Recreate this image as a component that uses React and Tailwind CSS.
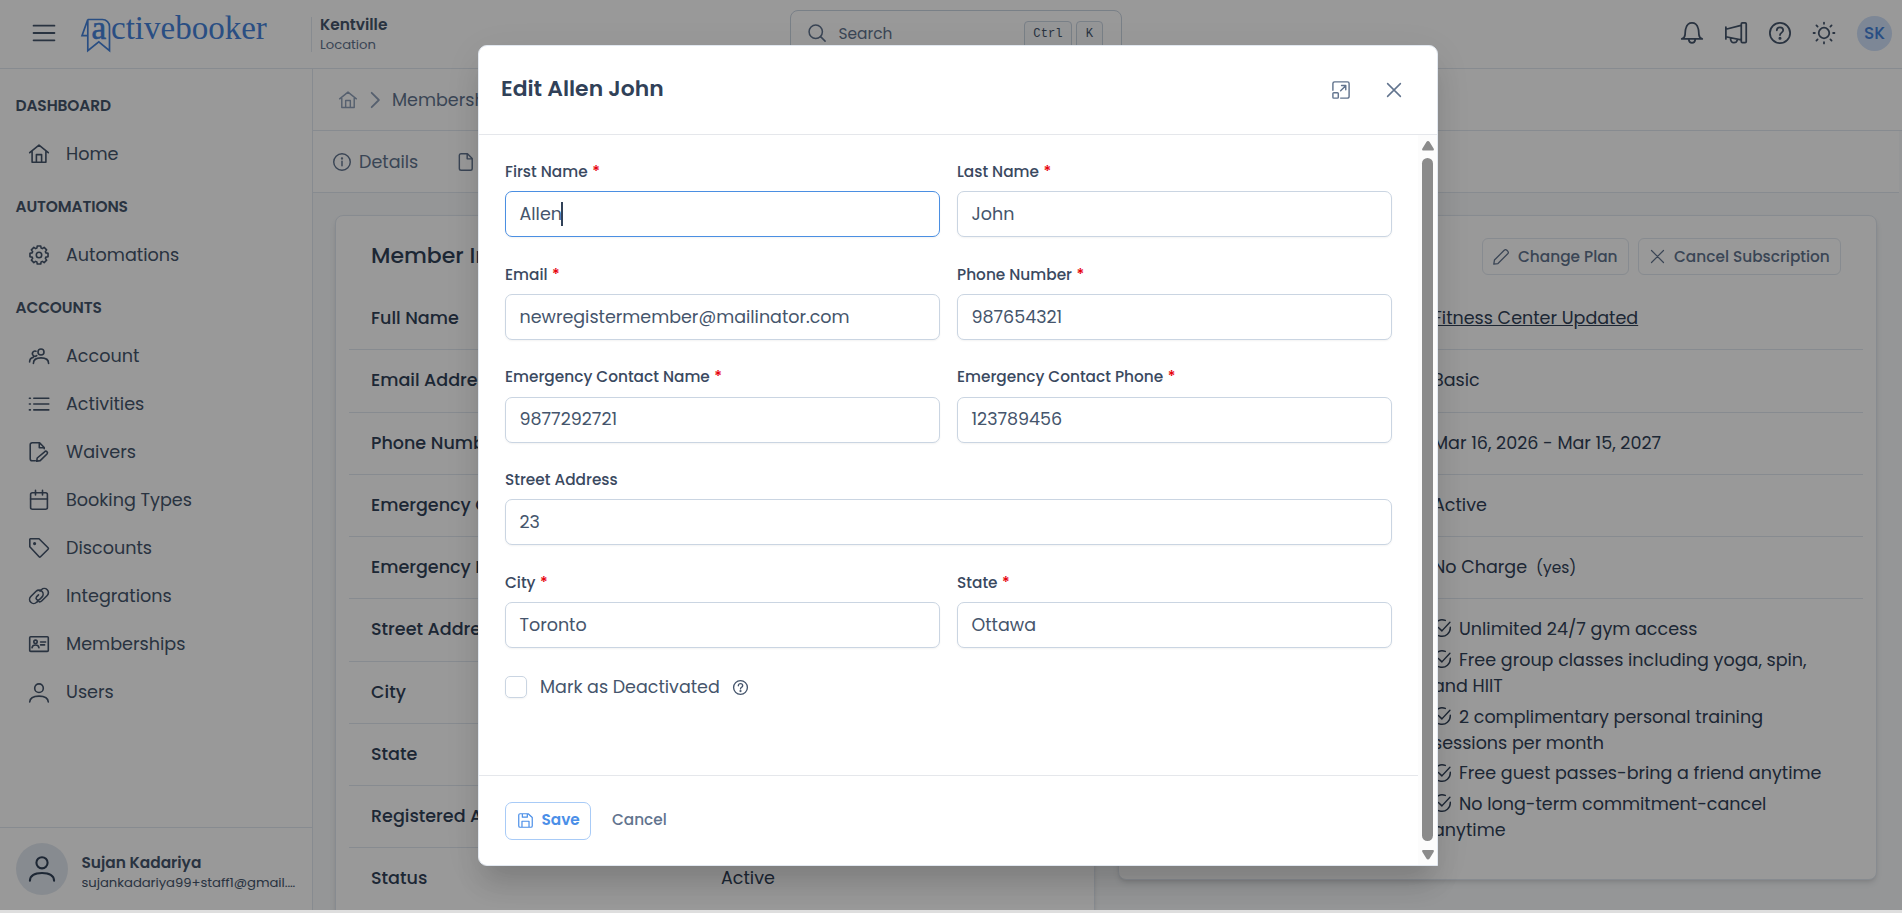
import React from "react";
import clsx from "clsx";

const cogPath = (() => {
  const pts = [];
  for (let i = 0; i < 8; i++) {
    [
      [-0.3, 7.2],
      [-0.19, 9.2],
      [0.19, 9.2],
      [0.3, 7.2],
    ].forEach(([offset, r]) => {
      const a = (i * Math.PI) / 4 + offset;
      pts.push(`${(10 + r * Math.sin(a)).toFixed(2)} ${(10 - r * Math.cos(a)).toFixed(2)}`);
    });
  }
  return `M${pts.join("L")}Z`;
})();

// 20x20 outline icons
const icons = {
  bars: <path d="M.5 3.3h19M.5 10h19M.5 16.7h19" />,
  home: (
    <path d="M.7 8.7 10 1.2l9.3 7.5M3.1 7v11.3h13.8V7M7.4 18v-7.4h5.2V18" />
  ),
  cog: (
    <>
      <path d={cogPath} />
      <circle cx="10" cy="10" r="2.7" />
    </>
  ),
  users: (
    <>
      <circle cx="12" cy="6" r="3" />
      <path d="M4.4 17.4c0-3.6 2.6-5.5 7.6-5.5s7.6 1.9 7.6 5.5M7 5.2a2.6 2.6 0 1 0 .7 4.4M.6 16c0-2.4 1.1-4 3.6-4.6" />
    </>
  ),
  list: <path d="M.4 4.2h1M.4 10h1M.4 15.9h1M4.8 4.2h15M4.8 10h15M4.8 15.9h15" />,
  fileEdit: (
    <path d="M6.3 18.8H3.1A1.9 1.9 0 0 1 1.2 17V2.7A1.9 1.9 0 0 1 3.1.8h7.5l4.6 4.7v1.2M10.3 1v4.8h4.6M7.7 19.3l.5-3.3 7.4-6.2a1.6 1.6 0 0 1 2.4 2.2l-6.8 6.6z" />
  ),
  calendar: (
    <>
      <rect x="1.6" y="2.8" width="16.8" height="16.4" rx="1.8" />
      <path d="M1.6 9h16.8M6.5.4v4.5M13.5.4v4.5" />
    </>
  ),
  tag: (
    <>
      <path d="M.8 1.2v7.5l9.3 10a1 1 0 0 0 1.4 0l7.6-7.5a1 1 0 0 0 0-1.4L10 .7H1.3z" />
      <circle cx="5.6" cy="5.6" r=".8" fill="currentColor" />
    </>
  ),
  link: (
    <path d="M9.1 14.9 7.6 16.3A4.1 4.1 0 0 1 1.8 10.5l5.3-5.2a4.1 4.1 0 0 1 5.8 5.8l-2.6 2.6a2 2 0 0 1-2.8-2.8l2-2M10.9 5.1l1.5-1.4a4.1 4.1 0 0 1 5.8 5.8l-5.3 5.2a4.1 4.1 0 0 1-2.6 1.2" />
  ),
  idCard: (
    <>
      <rect x=".7" y="2.8" width="18.6" height="14.6" rx="1" />
      <circle cx="6.5" cy="7.8" r="1.7" />
      <path d="M3 13.8c.3-2 1.5-2.8 3.5-2.8s3.2.8 3.5 2.8M11.6 8h5M11.6 10.9h4" />
    </>
  ),
  user: (
    <>
      <circle cx="10" cy="5.2" r="4.3" />
      <path d="M.7 19c.2-4 3-5.9 9.3-5.9s9.1 1.9 9.3 5.9" />
    </>
  ),
  search: (
    <>
      <circle cx="8.6" cy="8.6" r="7.4" />
      <path d="m14 14 5 5" />
    </>
  ),
  bell: (
    <path d="M.7 15.4C3 14.8 3.5 13.6 3.7 11.5c.2-2.1.1-4.2.8-6C5.4 2.5 7.2.9 10 .9s4.6 1.6 5.5 4.6c.7 1.8.6 3.9.8 6 .2 2.1.7 3.3 3 3.9zM7 15.8c.2 2 1.2 3.1 3 3.1s2.8-1.1 3-3.1" />
  ),
  megaphone: (
    <path d="M.8 4.6v10.8M.8 6.6l13.8-3.6M.8 13.4l13.8 2.8M15.8.9h2.5a1 1 0 0 1 1 1v15.9a1 1 0 0 1-1 1h-2.5a1 1 0 0 1-1-1V1.9a1 1 0 0 1 1-1zM5 14.6c-.1 2.7 1.2 4.2 3.1 4.2 1.5 0 2.7-.8 3.1-2.6" />
  ),
  question: (
    <>
      <circle cx="10" cy="10" r="9.2" />
      <path d="M7.1 7.6c0-1.7 1.2-2.8 2.9-2.8s2.9 1.1 2.9 2.7c0 2.2-2.9 2.2-2.9 4.4" />
      <circle cx="10" cy="14.7" r=".6" fill="currentColor" />
    </>
  ),
  sun: (
    <>
      <circle cx="10" cy="10" r="4.8" />
      <path d="M10 .5v1.2M10 18.3v1.2M.5 10h1.2M18.3 10h1.2M3.1 3.1l1.1 1.1M15.8 15.8l1.1 1.1M3.1 16.9l1.1-1.1M15.8 4.2l1.1-1.1" />
    </>
  ),
  chevron: <path d="m6.3 2 8 8-8 8" />,
  info: (
    <>
      <circle cx="10" cy="10" r="9.2" />
      <path d="M10 9v5.3" />
      <circle cx="10" cy="6" r=".5" fill="currentColor" />
    </>
  ),
  file: (
    <path d="M4.3.8h7.3l5.3 5.4v11a2 2 0 0 1-2 2H4.6a2 2 0 0 1-2-2V2.6A1.8 1.8 0 0 1 4.3.8zM11.3 1v5.5h5.4" />
  ),
  pencil: <path d="m1 19 .8-5.2L14 1.6a2.4 2.4 0 0 1 3.3 0l1.1 1.1a2.4 2.4 0 0 1 0 3.3L6.2 18.2z" />,
  times: <path d="m2 2 16 16M18 2 2 18" />,
  checkCircle: (
    <path d="M19.2 9.2v.8A9.2 9.2 0 1 1 13.7 1.6M6 9.4l3.9 3.8L18.8 3.6" />
  ),
  maximize: (
    <>
      <path d="M1 10.2V2.8A1.8 1.8 0 0 1 2.8 1h14.4A1.8 1.8 0 0 1 19 2.8v14.4a1.8 1.8 0 0 1-1.8 1.8H9.6M9.6 10.8l5.6-5.6M10.6 5.1h4.7v4.7" />
      <rect x="1" y="13" width="6" height="6" rx="1" />
    </>
  ),
  save: (
    <path d="M2.8 1h10.8l5.4 5v11.2a1.8 1.8 0 0 1-1.8 1.8H2.8A1.8 1.8 0 0 1 1 17.2V2.8A1.8 1.8 0 0 1 2.8 1zM5.3 19v-8h9.4v8M5.8 1v4.6h6.6V1" />
  ),
};

const Icon = ({ name, className, stroke = 1.6 }) => (
  <svg
    viewBox="0 0 20 20"
    className={clsx("shrink-0 overflow-visible", className)}
    fill="none"
    stroke="currentColor"
    strokeWidth={stroke}
    strokeLinecap="round"
    strokeLinejoin="round"
  >
    {icons[name]}
  </svg>
);

const sections = [
  { title: "DASHBOARD", items: [["home", "Home"]] },
  { title: "AUTOMATIONS", items: [["cog", "Automations"]] },
  {
    title: "ACCOUNTS",
    items: [
      ["users", "Account"],
      ["list", "Activities"],
      ["fileEdit", "Waivers"],
      ["calendar", "Booking Types"],
      ["tag", "Discounts"],
      ["link", "Integrations"],
      ["idCard", "Memberships"],
      ["user", "Users"],
    ],
  },
];

const memberRows = [
  "Full Name",
  "Email Address",
  "Phone Number",
  "Emergency Contact",
  "Emergency Phone",
  "Street Address",
  "City",
  "State",
  "Registered At",
];

const features = [
  "Unlimited 24/7 gym access",
  "Free group classes including yoga, spin, and HIIT",
  "2 complimentary personal training sessions per month",
  "Free guest passes-bring a friend anytime",
  "No long-term commitment-cancel anytime",
];

const Logo = () => (
  <svg width="190" height="44" viewBox="0 0 190 44" className="text-[#4583da]">
    <path
      d="M7.8 6.5h14.7a7 7 0 0 1 7 7v24.2L18.8 28.8 7.8 37.7V6.5L2 22.6h5.8"
      fill="none"
      stroke="currentColor"
      strokeWidth="1.7"
    />
    <text y="26" fill="currentColor" className="font-['Liberation_Serif',serif] text-[33px]">
      <tspan x="11.5" stroke="currentColor" strokeWidth=".6">
        a
      </tspan>
      <tspan x="31">ctivebooker</tspan>
    </text>
  </svg>
);

const Header = () => (
  <header className="flex h-[69px] shrink-0 items-center border-b border-slate-200 bg-white">
    <div className="flex w-[311px] items-center pl-[33px] text-slate-600">
      <Icon name="bars" className="-mt-[3px] h-[22px] w-[22px]" />
      <div className="mt-[2px] ml-[25px]">
        <Logo />
      </div>
    </div>
    <div className="flex h-[35px] w-[479px] flex-col justify-center border-l border-slate-200 pt-[2px] pl-2 text-slate-600">
      <span className="text-[15.4px] leading-5 font-semibold">Kentville</span>
      <span className="text-[13.2px] leading-5 text-slate-500">Location</span>
    </div>
    <div className="mt-[-2px] flex h-[46px] w-[332px] items-center rounded-lg border border-slate-300 pr-[18px] pl-[17px] text-slate-500">
      <Icon name="search" className="h-[18px] w-[18px]" stroke={1.7} />
      <span className="mt-px ml-[12.5px] flex-1 text-[15.4px]">Search</span>
      <div className="mt-[3px] flex gap-1 font-['Liberation_Mono',monospace] text-[12.2px] text-slate-600">
        <kbd className="flex h-[28px] w-12 items-center justify-center rounded border border-slate-300 bg-slate-50">
          Ctrl
        </kbd>
        <kbd className="flex h-[28px] w-[27px] items-center justify-center rounded border border-slate-300 bg-slate-50">
          K
        </kbd>
      </div>
    </div>
    <div className="ml-auto flex items-center gap-[22px] pr-[10px] text-slate-600">
      <Icon name="bell" className="-mt-[3px] h-[22px] w-[22px]" />
      <Icon name="megaphone" className="-mt-[3px] h-[22px] w-[22px]" />
      <Icon name="question" className="-mt-[3px] h-[22px] w-[22px]" />
      <Icon name="sun" className="-mt-[3px] h-[22px] w-[22px]" />
      <div className="-mt-px flex h-[35px] w-[35px] items-center justify-center rounded-full bg-[#d0e1fa] pt-px text-[17px] font-medium text-[#4583da]">
        SK
      </div>
    </div>
  </header>
);

const Sidebar = () => (
  <aside className="flex w-[313px] shrink-0 flex-col border-r border-slate-200 bg-white text-slate-600">
    <nav className="flex flex-1 flex-col gap-[4.6px] pt-[13px]">
      {sections.map((section) => (
        <div key={section.title}>
          <div className="flex h-[48px] items-center pl-[15.5px] text-[15.4px] font-semibold tracking-[-0.1px]">
            {section.title}
          </div>
          {section.items.map(([icon, label]) => (
            <a key={label} className="flex h-[48.1px] items-center gap-[17px] pt-[0.9px] pl-[29px] text-[17.6px]">
              <Icon name={icon} className="h-5 w-5" />
              {label}
            </a>
          ))}
        </div>
      ))}
    </nav>
    <div className="flex h-[83px] items-center gap-[13.5px] border-t border-slate-200 pr-[16px] pl-4">
      <div className="flex h-[52px] w-[52px] shrink-0 items-center justify-center rounded-full bg-slate-200 text-slate-700">
        <Icon name="user" className="h-[26px] w-[26px]" />
      </div>
      <div className="min-w-0 pt-[7px]">
        <div className="text-[15.4px] leading-5 font-semibold">Sujan Kadariya</div>
        <div className="truncate text-[13.2px] leading-5 tracking-[-0.04px]">sujankadariya99+staff1@gmail.com</div>
      </div>
    </div>
  </aside>
);

const MemberCard = () => (
  <section className="w-[760px] shrink-0 rounded-lg border border-slate-200 bg-white px-[13px] pt-[17px] shadow-md">
    <h2 className="flex h-[55px] items-start pt-[6px] pl-[22px] text-[22px] leading-[33px] font-medium text-slate-700">
      Member Information
    </h2>
    {memberRows.map((row) => (
      <div
        key={row}
        className="flex h-[62.25px] items-center border-b border-slate-200 pb-[0.6px] pl-[22px] text-[17.55px] font-medium text-slate-700"
      >
        {row}
      </div>
    ))}
    <div className="flex h-[72px] items-start pt-[17px] pl-[22px] text-[17.55px] text-slate-700">
      <span className="w-[350px] font-medium">Status</span>
      <span>Active</span>
    </div>
  </section>
);

const PlanRow = ({ children }) => (
  <div className="flex h-[62.25px] items-center border-b border-slate-200 pb-[0.6px] pl-[301px]">{children}</div>
);

const PlanCard = () => (
  <section className="h-[665px] w-[759px] shrink-0 rounded-lg border border-slate-200 bg-white px-[13px] pt-[17px] text-[17.55px] text-slate-700 shadow-md">
    <div className="flex h-[55px] items-start justify-end gap-[9px] pt-[5px] pr-[22px] text-[15.35px] font-medium text-slate-500">
      <button className="flex h-[37px] w-[147px] items-center gap-[9px] rounded-md border border-slate-200 pl-[10px]">
        <Icon name="pencil" className="h-4 w-4" />
        Change Plan
      </button>
      <button className="flex h-[37px] w-[203px] items-center gap-[9px] rounded-md border border-slate-200 pl-[11px]">
        <Icon name="times" className="h-[15px] w-[15px]" />
        Cancel Subscription
      </button>
    </div>
    <PlanRow>
      <span className="underline">Fitness Center Updated</span>
    </PlanRow>
    <PlanRow>Basic</PlanRow>
    <PlanRow>Mar 16, 2026 - Mar 15, 2027</PlanRow>
    <PlanRow>Active</PlanRow>
    <PlanRow>
      No Charge <span className="ml-[9px] text-[15.4px]">(yes)</span>
    </PlanRow>
    <ul className="flex flex-col gap-[4.3px] pt-[16.8px] pr-[22px] pl-[301px] leading-[26.3px]">
      {features.map((feature) => (
        <li key={feature}>
          <Icon name="checkCircle" className="mr-2 mb-1 inline-block h-[18px] w-[18px]" />
          {feature}
        </li>
      ))}
    </ul>
  </section>
);

const Field = ({ label, value, required, focused, wide }) => (
  <div className={clsx("flex h-[102.75px] flex-col", wide && "col-span-2")}>
    <label className="flex h-[38px] items-center pb-[1.4px] text-[15.35px] font-medium text-[#3a495f]">
      {label}
      {required && <span className="ml-[4.5px] text-red-600">*</span>}
    </label>
    <div
      className={clsx(
        "flex h-[46px] items-center rounded-[7px] border bg-white px-[13.5px] text-[17.5px] text-slate-600 shadow-xs",
        focused ? "border-[#4b8fe2]" : "border-slate-300"
      )}
    >
      {value}
      {focused && <span className="-ml-px h-6 w-[2px] bg-slate-700" />}
    </div>
  </div>
);

const EditDialog = () => (
  <div className="flex h-[821px] w-[960px] flex-col rounded-[9px] rounded-br-none border border-slate-200 bg-white text-slate-700 shadow-[0_22px_28px_-5px_rgba(0,0,0,0.14),0_8px_40px_0px_rgba(0,0,0,0.06)]">
    <div className="flex h-[89px] shrink-0 items-center border-b border-gray-200 pr-[35px] pl-[22px]">
      <h1 className="flex-1 pb-[2px] text-[21.9px] font-semibold">Edit Allen John</h1>
      <div className="flex items-center gap-[36.5px] text-slate-500">
        <Icon name="maximize" className="h-[18px] w-[18px]" />
        <Icon name="times" className="h-4 w-4" stroke={1.9} />
      </div>
    </div>
    <div className="flex min-h-0 flex-1">
      <div className="flex flex-1 flex-col">
        <div className="grid grid-cols-2 gap-x-[17px] pt-[18px] pr-[26px] pl-[26px]">
          <Field label="First Name" value="Allen" required focused />
          <Field label="Last Name" value="John" required />
          <Field label="Email" value="newregistermember@mailinator.com" required />
          <Field label="Phone Number" value="987654321" required />
          <Field label="Emergency Contact Name" value="9877292721" required />
          <Field label="Emergency Contact Phone" value="123789456" required />
          <Field label="Street Address" value="23" wide />
          <Field label="City" value="Toronto" required />
          <Field label="State" value="Ottawa" required />
        </div>
        <div className="mt-[9.5px] flex h-[22px] items-center pl-[26px] text-[17.5px] text-slate-600">
          <span className="h-[22px] w-[22px] rounded-[5px] border border-slate-300 shadow-xs" />
          <span className="ml-[13px]">Mark as Deactivated</span>
          <Icon name="question" className="ml-[13.5px] h-[15px] w-[15px]" stroke={1.8} />
        </div>
        <div className="mt-auto flex h-[90px] items-center gap-[21px] border-t border-gray-200 pl-[26px] text-[15.3px] font-medium">
          <button className="flex h-[38px] w-[86px] items-center gap-[9px] rounded-[7px] border border-[#a8cbf7] pl-[11.5px] font-semibold text-[#4b8fe8]">
            <Icon name="save" className="h-[15px] w-[15px]" />
            <span className="-mt-px">Save</span>
          </button>
          <span className="-mt-px text-slate-500">Cancel</span>
        </div>
      </div>
      <div className="flex w-[19px] shrink-0 flex-col items-center bg-[#fcfcfc] pt-[6px] pb-[5px]">
        <svg width="12" height="10" viewBox="0 0 12 10" fill="#8b8b8b">
          <path d="M6 0Q7 0 7.6 1L11.6 7.6Q12.4 9.4 11 9.6H1Q-.4 9.4.4 7.6L4.4 1Q5 0 6 0z" />
        </svg>
        <div className="mt-[7px] mb-[9px] w-[11px] flex-1 rounded-full bg-[#8b8b8b]" />
        <svg width="12" height="10" viewBox="0 0 12 10" fill="#8b8b8b">
          <path d="M6 9.6Q7 9.6 7.6 8.6L11.6 2Q12.4.2 11 0H1Q-.4.2.4 2L4.4 8.6Q5 9.6 6 9.6z" />
        </svg>
      </div>
    </div>
  </div>
);

const App = () => {
  return (
    <div className="relative flex h-[913px] w-[1902px] flex-col overflow-hidden bg-[#dedede] font-['Poppins','Inter',sans-serif]">
      <div className="flex h-[910px] flex-col overflow-hidden">
        <Header />
        <div className="flex min-h-0 flex-1">
          <Sidebar />
          <main className="min-w-0 flex-1 overflow-hidden bg-slate-50">
            <div className="flex h-[62px] items-center border-b border-slate-200 bg-white pl-[26px] text-[17.55px] text-slate-500">
              <Icon name="home" className="h-[18px] w-[18px] text-slate-400" />
              <Icon name="chevron" className="mx-[8.5px] h-[18px] w-[18px] text-slate-400" stroke={2} />
              <span className="pt-[2px]">Memberships</span>
            </div>
            <div className="mr-[3px] flex h-[62px] items-center border-b border-slate-200 bg-white pl-5 text-[17.55px] text-slate-500">
              <Icon name="info" className="h-[18px] w-[18px]" />
              <span className="mr-[39px] ml-2 pt-[2px]">Details</span>
              <Icon name="file" className="h-[18px] w-[18px]" />
            </div>
            <div className="flex items-start gap-[23px] pt-[22px] pl-[22px]">
              <MemberCard />
              <PlanCard />
            </div>
          </main>
        </div>
      </div>
      <div className="absolute inset-x-0 top-0 flex h-[910px] justify-center bg-black/40 pt-[45px] pl-[14px]">
        <EditDialog />
      </div>
    </div>
  );
};

export default App;
